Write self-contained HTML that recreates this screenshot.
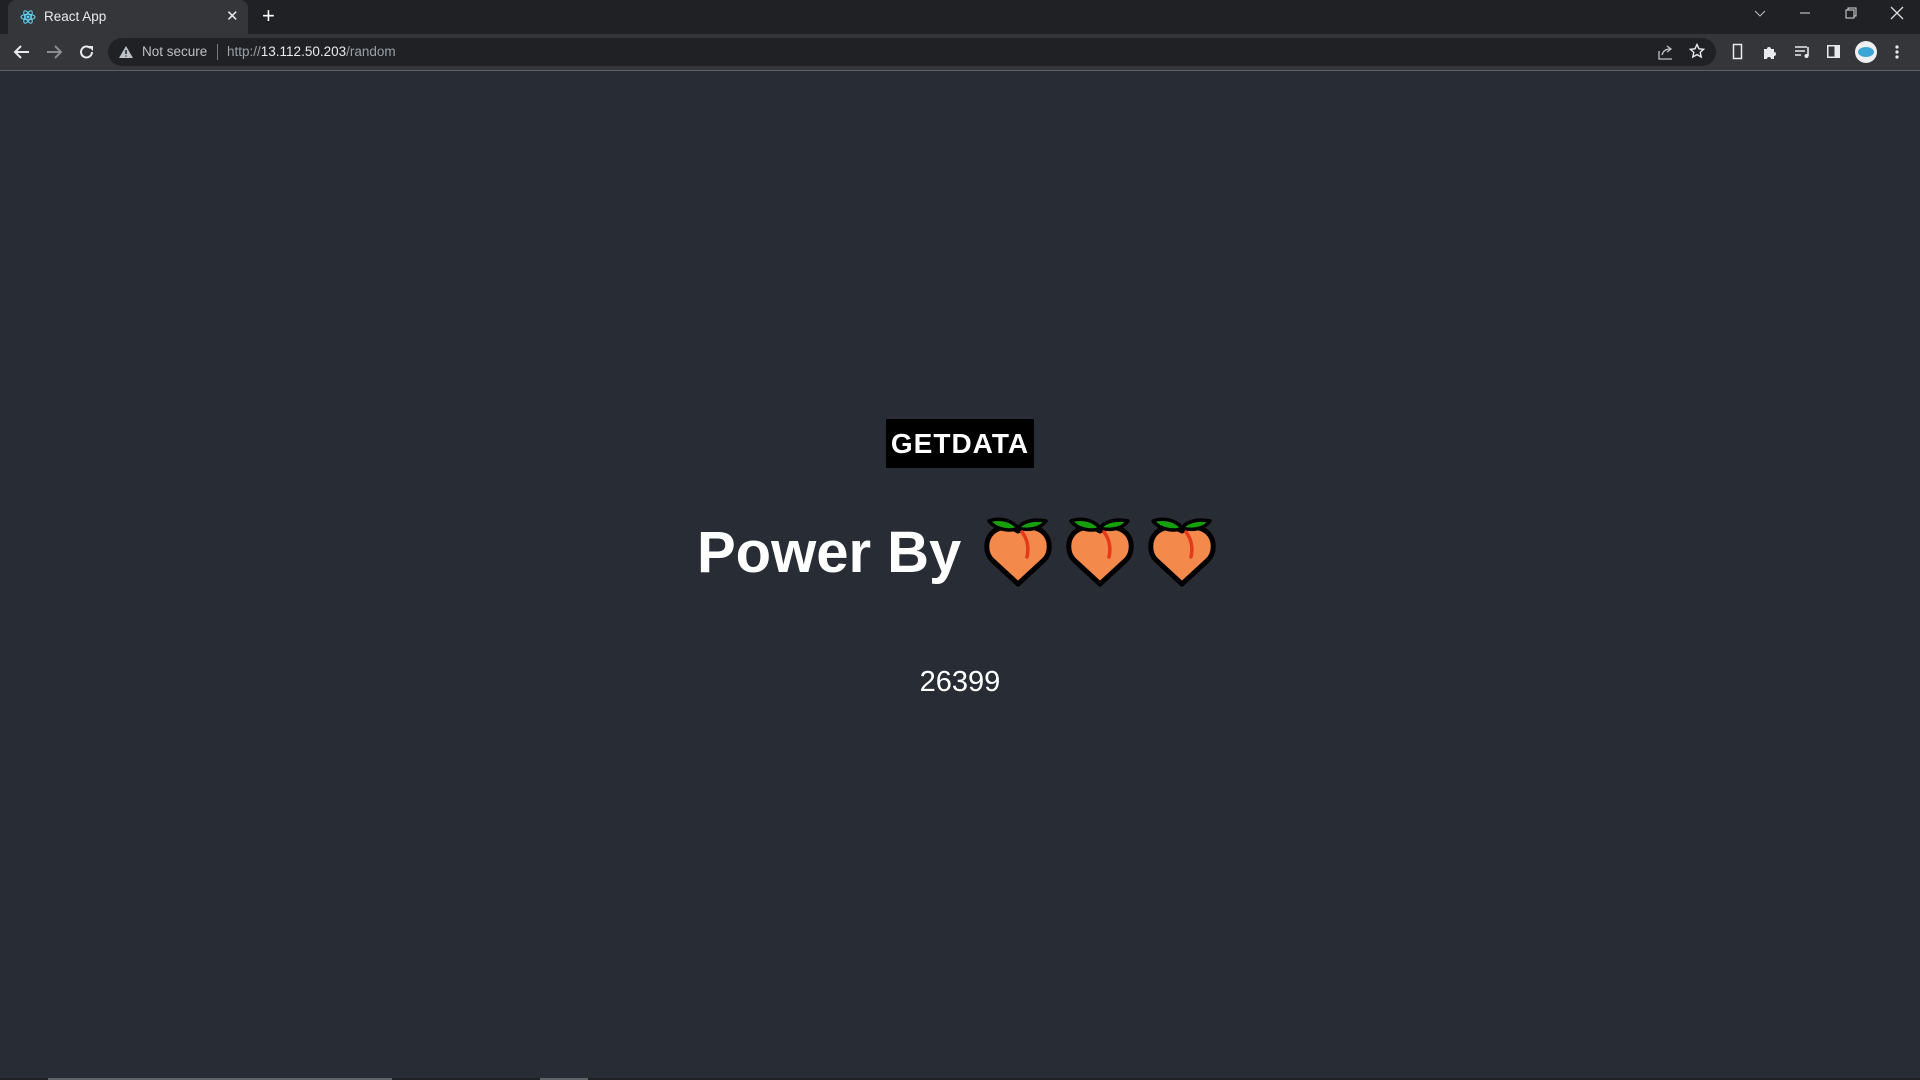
<!DOCTYPE html>
<html><head><meta charset="utf-8"><style>
*{margin:0;padding:0;box-sizing:border-box}
body{width:1920px;height:1080px;overflow:hidden;background:#282c34;font-family:"Liberation Sans",sans-serif;position:relative}
.strip{position:absolute;left:0;top:0;width:1920px;height:34px;background:#202124}
.tab{position:absolute;left:8px;top:0;width:240px;height:34px;background:#35363a;border-radius:8px 8px 0 0}
.tb{position:absolute;left:0;top:34px;width:1920px;height:36px;background:#35363a}
.line{position:absolute;left:0;top:70px;width:1920px;height:1px;background:#5f6368}
.omni{position:absolute;left:108px;top:38px;width:1608px;height:28px;background:#202124;border-radius:14px}
.t{position:absolute;color:#e8eaed;font-size:13.5px;white-space:nowrap}
svg{position:absolute}
.btn{position:absolute;left:886px;top:419px;width:148px;height:49px;background:#000;color:#fff;font-weight:bold;font-size:28px;line-height:50px;text-align:center;letter-spacing:1px}
.h{position:absolute;left:697px;top:518px;font-weight:bold;font-size:58px;color:#fff;line-height:70px}
.num{position:absolute;left:0;width:1920px;text-align:center;top:666px;font-size:29px;color:#fff}
</style></head><body>
<div class="strip"></div>
<div class="tab"></div>
<svg style="left:20px;top:9px" width="16" height="16" viewBox="0 0 16 16"><g fill="none" stroke="#61dafb" stroke-width="1"><ellipse cx="8" cy="8" rx="7" ry="2.7"/><ellipse cx="8" cy="8" rx="7" ry="2.7" transform="rotate(60 8 8)"/><ellipse cx="8" cy="8" rx="7" ry="2.7" transform="rotate(120 8 8)"/></g><circle cx="8" cy="8" r="1.4" fill="#61dafb"/></svg>
<div class="t" style="left:44px;top:9px">React App</div>
<div class="t" style="left:226px;top:7px;font-size:15px">✕</div>
<div class="t" style="left:262px;top:3px;font-size:22px;color:#fff">+</div>
<svg style="left:1752px;top:8px" width="16" height="12"><path d="M3 3l5 5 5-5" stroke="#bbb" fill="none"/></svg>
<svg style="left:1798px;top:6px" width="14" height="14"><path d="M2 7h10" stroke="#ddd"/></svg>
<svg style="left:1844px;top:6px" width="14" height="14"><rect x="2" y="4" width="8" height="8" fill="none" stroke="#ddd"/><path d="M4 4V2h8v8h-2" fill="none" stroke="#ddd"/></svg>
<svg style="left:1890px;top:6px" width="14" height="14"><path d="M1 1l12 12M13 1L1 13" stroke="#ddd" stroke-width="1.3"/></svg>
<div class="tb"></div><div class="line"></div>
<svg style="left:13px;top:44px" width="18" height="16"><path d="M16 8H3M8 2L2 8l6 6" stroke="#e8eaed" stroke-width="2" fill="none"/></svg>
<svg style="left:45px;top:44px" width="18" height="16"><path d="M2 8h13M10 2l6 6-6 6" stroke="#8a8c90" stroke-width="2" fill="none"/></svg>
<svg style="left:78px;top:43px" width="18" height="18"><path d="M14 9a5.5 5.5 0 1 1-1.6-3.9" stroke="#e8eaed" stroke-width="2" fill="none"/><path d="M10 3h5v5z" fill="#e8eaed"/></svg>
<div class="omni"></div>
<svg style="left:118px;top:45px" width="16" height="14"><path d="M8 1L15 13H1z" fill="#bdc1c6"/><path d="M8 5v4M8 10.5v1" stroke="#202124" stroke-width="1.5"/></svg>
<div class="t" style="left:142px;top:44px;color:#bdc1c6">Not secure</div>
<div style="position:absolute;left:217px;top:44px;width:1px;height:16px;background:#777"></div>
<div class="t" style="left:227px;top:44px;color:#9aa0a6">http://<span style="color:#e8eaed">13.112.50.203</span>/random</div>
<svg style="left:1657px;top:44px" width="18" height="16"><path d="M2 7v8h13M5 11c1-4 4-6 8-6M10 2l4 3-4 3" stroke="#bdc1c6" fill="none" stroke-width="1.3"/></svg>
<svg style="left:1689px;top:43px" width="16" height="16"><path d="M8 1.5l2 4.3 4.6.5-3.4 3.1 1 4.6L8 11.6 3.8 14l1-4.6L1.4 6.3 6 5.8z" fill="none" stroke="#e8eaed" stroke-width="1.4"/></svg>
<svg style="left:1730px;top:43px" width="16" height="18"><rect x="3.5" y="1.5" width="8" height="14" fill="none" stroke="#e8eaed" stroke-width="1.5"/></svg>
<svg style="left:1762px;top:44px" width="16" height="16"><path d="M2 5h3a2 2 0 1 1 4 0h3v3a2 2 0 1 1 0 4v3H9a2 2 0 1 0-4 0H2z" fill="#e8eaed"/></svg>
<svg style="left:1794px;top:44px" width="18" height="16"><path d="M1 3h12M1 7h10M1 11h6" stroke="#e8eaed" stroke-width="1.6"/><path d="M14 3v9" stroke="#e8eaed" stroke-width="1.6"/><circle cx="12.5" cy="12" r="2" fill="#e8eaed"/></svg>
<svg style="left:1826px;top:44px" width="16" height="16"><rect x="1" y="1" width="13" height="13" fill="#e8eaed"/><rect x="2.5" y="2.5" width="6" height="10" fill="#35363a"/></svg>
<svg style="left:1855px;top:41px" width="22" height="22"><circle cx="11" cy="11" r="11" fill="#f0f0f0"/><ellipse cx="11" cy="11" rx="8" ry="5" fill="#3aa7d6"/></svg>
<svg style="left:1894px;top:44px" width="6" height="16"><circle cx="3" cy="3" r="1.6" fill="#e8eaed"/><circle cx="3" cy="8" r="1.6" fill="#e8eaed"/><circle cx="3" cy="13" r="1.6" fill="#e8eaed"/></svg>

<div class="btn">GETDATA</div>
<div class="h">Power By</div>
<svg style="left:982px;top:516px" width="240" height="72" viewBox="0 0 240 72">
<defs><g id="p">
<path d="M34 68 L8 44 C1 37 1 24 8 17 C15 10 26 10 34 15 C42 10 53 10 60 17 C67 24 67 37 60 44 Z" fill="#f4894c" stroke="#000" stroke-width="5" stroke-linejoin="round"/>
<path d="M5 5 C12 2 26 2 34 12 C27 16 12 14 5 5Z" fill="#16a10c" stroke="#000" stroke-width="3.5" stroke-linejoin="round"/>
<path d="M34 12 C40 4 52 3 62 5 C56 13 44 15 34 12Z" fill="#16a10c" stroke="#000" stroke-width="3.5" stroke-linejoin="round"/>
<path d="M38 16 C44 24 45 32 43 41" fill="none" stroke="#e6391a" stroke-width="3.5" stroke-linecap="round"/>
</g></defs>
<use href="#p" x="2"/><use href="#p" x="84"/><use href="#p" x="166"/>
</svg>
<div class="num">26399</div>

<div style="position:absolute;left:0;top:1078px;width:1920px;height:2px;background:#202124"></div>
<div style="position:absolute;left:48px;top:1078px;width:344px;height:2px;background:#5f6368"></div>
<div style="position:absolute;left:540px;top:1078px;width:48px;height:2px;background:#5f6368"></div>
</body></html>
